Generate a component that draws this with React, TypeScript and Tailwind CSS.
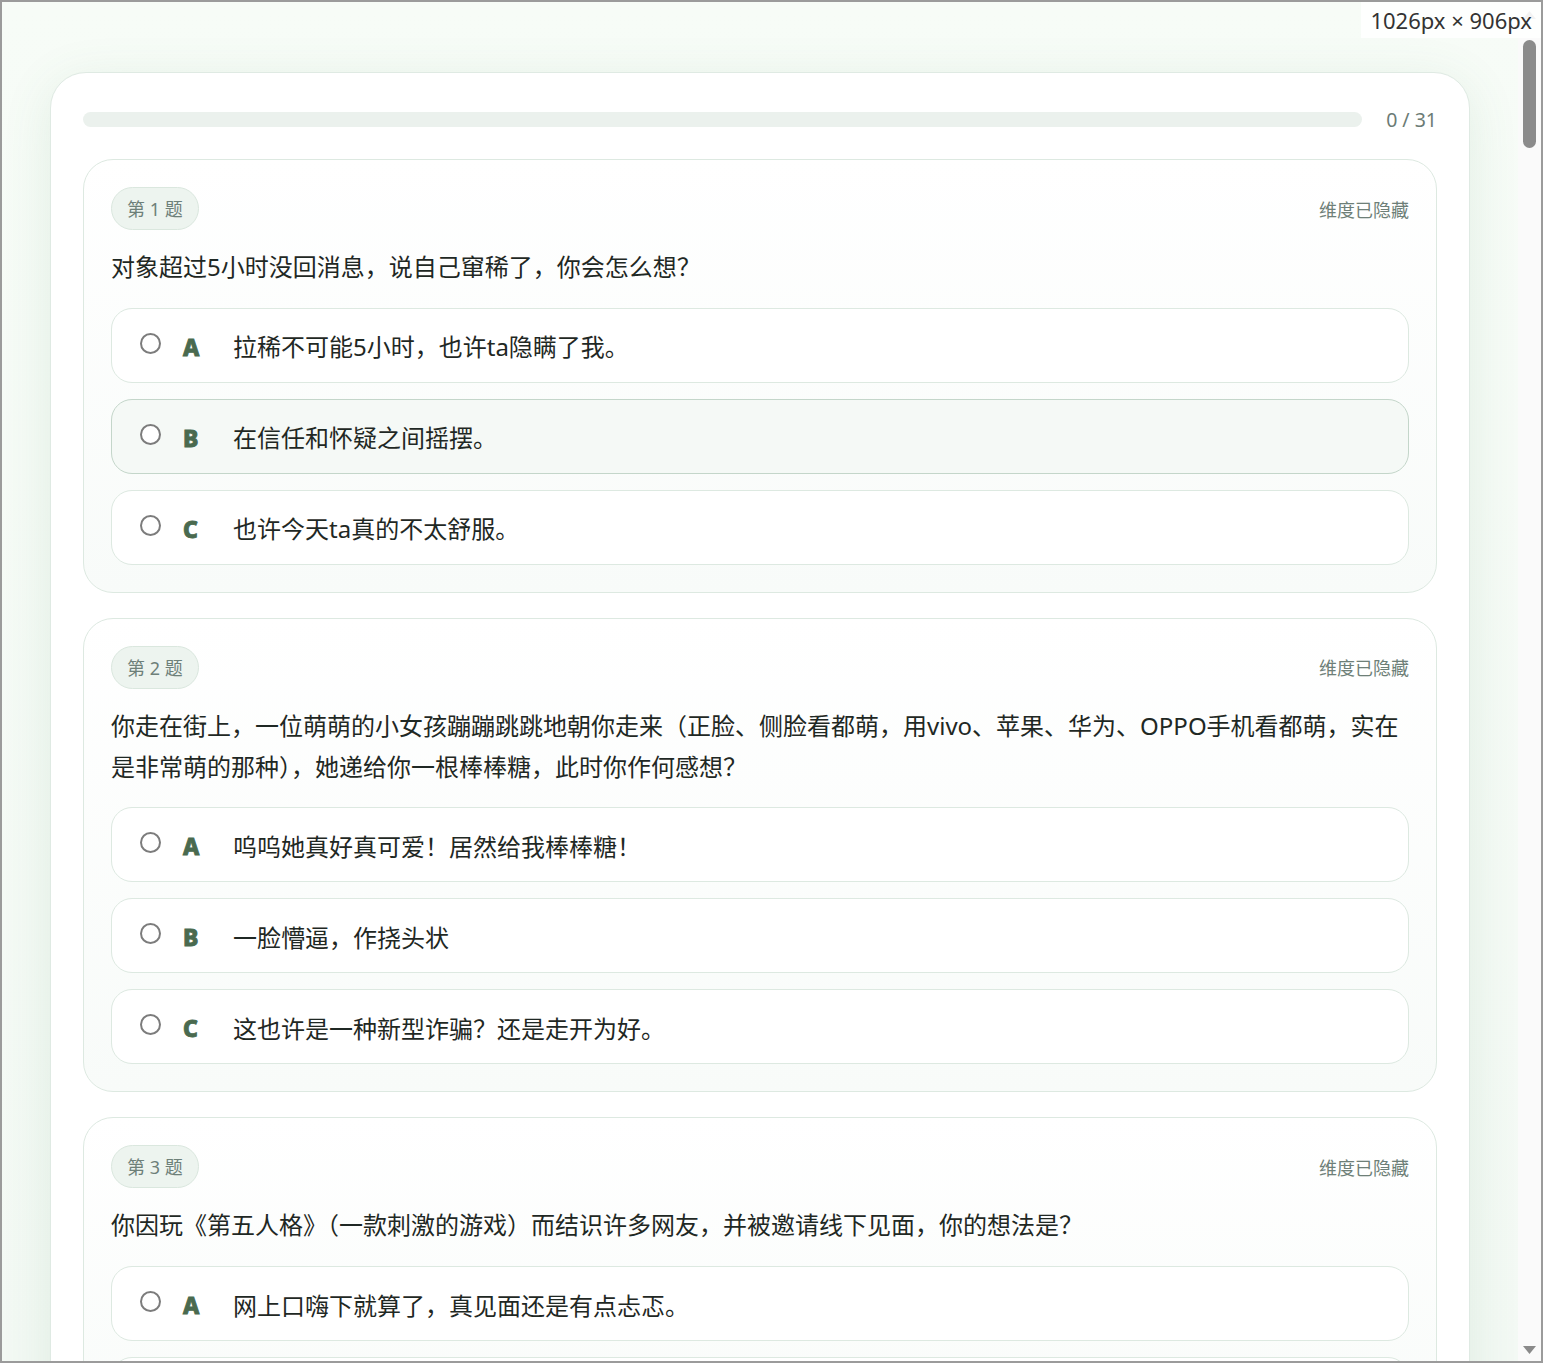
import React from "react";

type Q = { n: number; q: string; opts: string[]; hover?: number; more?: boolean };

const questions: Q[] = [
  {
    n: 1,
    q: "对象超过5小时没回消息，说自己窜稀了，你会怎么想？",
    opts: ["拉稀不可能5小时，也许ta隐瞒了我。", "在信任和怀疑之间摇摆。", "也许今天ta真的不太舒服。"],
    hover: 1,
  },
  {
    n: 2,
    q: "你走在街上，一位萌萌的小女孩蹦蹦跳跳地朝你走来（正脸、侧脸看都萌，用vivo、苹果、华为、OPPO手机看都萌，实在是非常萌的那种），她递给你一根棒棒糖，此时你作何感想？",
    opts: ["呜呜她真好真可爱！居然给我棒棒糖！", "一脸懵逼，作挠头状", "这也许是一种新型诈骗？还是走开为好。"],
  },
  {
    n: 3,
    q: "你因玩《第五人格》（一款刺激的游戏）而结识许多网友，并被邀请线下见面，你的想法是？",
    opts: ["网上口嗨下就算了，真见面还是有点忐忑。"],
    more: true,
  },
];

const letters = ["A", "B", "C"];

function Option({ letter, text, active }: { letter: string; text: string; active: boolean }) {
  return (
    <div
      className={
        active
          ? "flex items-center h-[75px] pl-[28px] rounded-[21px] border border-[#c4d6ca] bg-[#f5f9f6]"
          : "flex items-center h-[75px] pl-[28px] rounded-[21px] border border-[#dde9e1] bg-white"
      }
    >
      <div className="w-[21px] h-[21px] shrink-0 rounded-full border-2 border-[#7c7c7c] bg-white mb-[4px]" />
      <div className="w-[28px] ml-[22px] mt-[4px] text-[23px] leading-none font-extrabold text-[#4a6a4f] [-webkit-text-stroke:0.9px_#4a6a4f] font-['Noto_Sans',sans-serif]">
        {letter}
      </div>
      <div className="ml-[22px] mt-[4px] text-[24px] leading-[36px] text-[#1f2824]">{text}</div>
    </div>
  );
}

function QuestionCard({ q }: { q: Q }) {
  return (
    <div className="rounded-[30px] border border-[#dde9e1] bg-[linear-gradient(180deg,#ffffff_0%,#f8fbf9_100%)] px-[27px] pt-[27px] pb-[27px]">
      <div className="flex items-center justify-between">
        <div className="h-[43px] px-[15px] pt-[2px] flex items-center rounded-full bg-[#edf4ef] border border-[#dae7de] text-[18px] text-[#6e8079]">
          第 {q.n} 题
        </div>
        <div className="mt-[3px] text-[18px] text-[#6e7f78]">维度已隐藏</div>
      </div>
      <div className="mt-[17px] mb-[20px] text-[24px] leading-[1.7] text-[#1f2824]">{q.q}</div>
      <div className="flex flex-col gap-[16px]">
        {q.opts.map((o, i) => (
          <Option key={i} letter={letters[i]} text={o} active={q.hover === i} />
        ))}
        {q.more && <div className="h-[75px] rounded-[21px] border border-[#dde9e1] bg-white" />}
      </div>
    </div>
  );
}

export default function App() {
  return (
    <div className="relative w-[1543px] h-[1363px] overflow-hidden border-2 border-[#9b9b9b] flex font-['Noto_Sans','Noto_Sans_CJK_SC',sans-serif]">
      <div className="flex-1 overflow-hidden bg-[linear-gradient(180deg,#f7fcf7_0%,#f3f9f4_100%)] px-[48px] pt-[70px]">
        <div className="rounded-[36px] border border-[#dfeae3] bg-white shadow-[0_10px_50px_rgba(70,140,90,0.12)] px-[32px] pt-[39px] pb-[40px]">
          <div className="flex items-center gap-[24px] h-[15px]">
            <div className="flex-1 h-[15px] rounded-full bg-[#ebf1ed]" />
            <div className="text-[19.5px] leading-[15px] text-[#6b7b75]">0 / 31</div>
          </div>
          <div className="mt-[32px] flex flex-col gap-[25px]">
            {questions.map((q) => (
              <QuestionCard key={q.n} q={q} />
            ))}
          </div>
        </div>
      </div>
      <div className="w-[23px] shrink-0 bg-[#fafafa] flex flex-col items-center">
        <svg className="mt-[8px]" width="15" height="10" viewBox="0 0 15 10">
          <path d="M1 9 L7.5 1 L14 9 Z" fill="#8a8a8a" />
        </svg>
        <div className="mt-[20px] w-[13px] h-[108px] rounded-full bg-[#8b8b8b]" />
        <svg className="mt-auto mb-[6px]" width="15" height="10" viewBox="0 0 15 10">
          <path d="M1 1 L14 1 L7.5 9 Z" fill="#8a8a8a" />
        </svg>
      </div>
      <div className="absolute top-0 right-0 h-[36px] px-[9px] flex items-center bg-white/90 text-[22px] text-[#333333] font-['Noto_Sans',sans-serif]">
        1026px × 906px
      </div>
    </div>
  );
}
